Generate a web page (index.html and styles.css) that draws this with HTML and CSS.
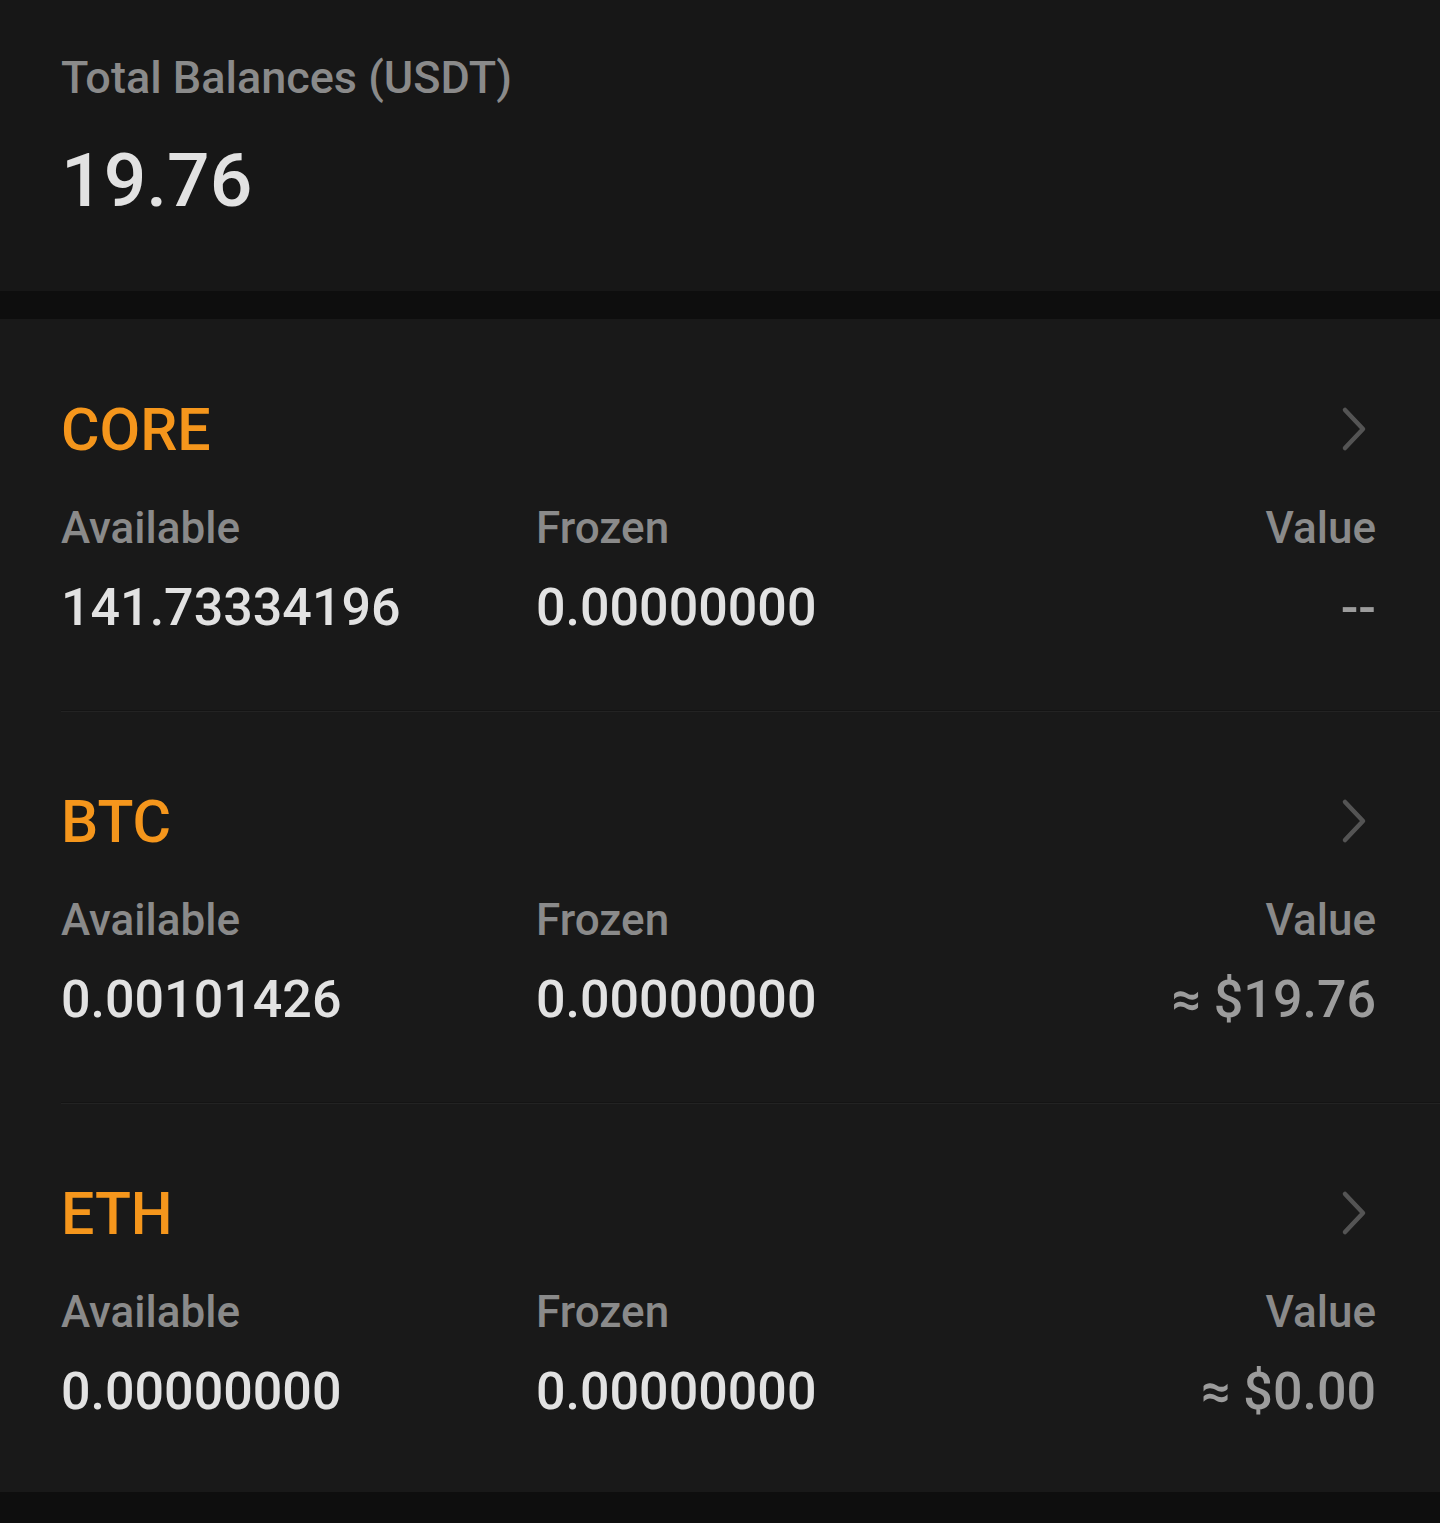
FILE: index.html
```html
<!DOCTYPE html>
<html lang="en">
<head>
    <meta charset="UTF-8">
    <meta name="viewport" content="width=device-width, initial-scale=1.0">
    <title>Balances</title>
    <link rel="stylesheet" href="styles.css">
</head>
<body>
    <div class="summary">
        <div class="summary-label">Total Balances (USDT)</div>
        <div class="summary-value">19.76</div>
    </div>

    <div class="assets">
        <div class="asset">
            <div class="asset-head">
                <span class="asset-name">CORE</span>
                <svg class="chevron" width="26" height="46" viewBox="0 0 26 46"><path d="M4 4 L22 23 L4 42"/></svg>
            </div>
            <div class="asset-grid">
                <div class="label">Available</div>
                <div class="label">Frozen</div>
                <div class="label right">Value</div>
                <div class="num">141.73334196</div>
                <div class="num">0.00000000</div>
                <div class="num right muted">--</div>
            </div>
        </div>

        <div class="asset">
            <div class="asset-head">
                <span class="asset-name">BTC</span>
                <svg class="chevron" width="26" height="46" viewBox="0 0 26 46"><path d="M4 4 L22 23 L4 42"/></svg>
            </div>
            <div class="asset-grid">
                <div class="label">Available</div>
                <div class="label">Frozen</div>
                <div class="label right">Value</div>
                <div class="num">0.00101426</div>
                <div class="num">0.00000000</div>
                <div class="num right muted">≈ $19.76</div>
            </div>
        </div>

        <div class="asset">
            <div class="asset-head">
                <span class="asset-name">ETH</span>
                <svg class="chevron" width="26" height="46" viewBox="0 0 26 46"><path d="M4 4 L22 23 L4 42"/></svg>
            </div>
            <div class="asset-grid">
                <div class="label">Available</div>
                <div class="label">Frozen</div>
                <div class="label right">Value</div>
                <div class="num">0.00000000</div>
                <div class="num">0.00000000</div>
                <div class="num right muted">≈ $0.00</div>
            </div>
        </div>
    </div>
</body>
</html>
```

FILE: styles.css
```css
body {
    margin: 0;
    font-family: Roboto, "Liberation Sans", sans-serif;
    background: #0e0e0e;
    line-height: 1.2;
    min-height: 1523px;
}

.summary {
    background: #171717;
    padding: 51px 61px 66px;
    margin-bottom: 28px;
}

.summary-label {
    font-size: 45px;
    font-weight: 500;
    color: #8a8a8a;
}

.summary-value {
    font-size: 75px;
    font-weight: 500;
    color: #e2e2e2;
    margin-top: 30px;
}

.assets {
    background: #191919;
    padding-bottom: 2px;
}

.asset {
    margin-left: 61px;
    padding: 76px 64px 71px 0;
    border-bottom: 1px solid #141414;
    box-shadow: 0 1px 0 #232323;
}

.asset:last-child {
    padding-bottom: 67px;
    border-bottom: none;
    box-shadow: none;
}

.asset-head {
    display: flex;
    justify-content: space-between;
    align-items: center;
}

.asset-name {
    font-size: 59px;
    font-weight: 500;
    color: #f5961c;
}

.chevron {
    margin-right: 9px;
    margin-top: -2px;
}

.chevron path {
    fill: none;
    stroke: #545454;
    stroke-width: 4.5;
    stroke-linecap: round;
    stroke-linejoin: round;
}

.asset-grid {
    display: grid;
    grid-template-columns: 475px 1fr auto;
    row-gap: 22px;
    margin-top: 36px;
}

.label {
    font-size: 44px;
    font-weight: 500;
    color: #8a8a8a;
}

.num {
    font-size: 52px;
    font-weight: 500;
    color: #e2e2e2;
}

.right {
    text-align: right;
}

.muted {
    color: #9c9c9c;
}
```
